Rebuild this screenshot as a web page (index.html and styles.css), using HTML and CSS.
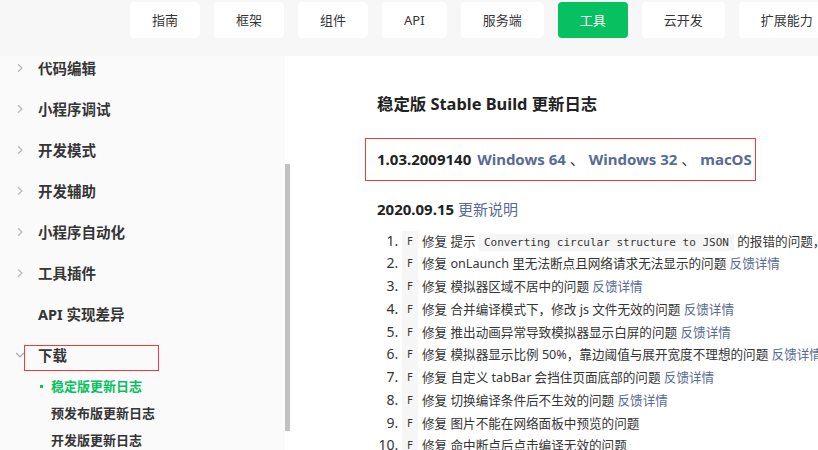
FILE: index.html
```html
<!DOCTYPE html>
<html lang="zh-CN">
<head>
<meta charset="utf-8">
<title>稳定版更新日志</title>
<link rel="stylesheet" href="styles.css">
</head>
<body>
<header class="topbar">
  <nav class="tabs">
    <a class="tab">指南</a>
    <a class="tab">框架</a>
    <a class="tab">组件</a>
    <a class="tab">API</a>
    <a class="tab">服务端</a>
    <a class="tab active">工具</a>
    <a class="tab">云开发</a>
    <a class="tab">扩展能力</a>
  </nav>
</header>
<div class="layout">
  <aside class="sidebar">
    <ul class="menu">
      <li class="menu-item"><span class="chev"><svg width="8" height="10" viewBox="0 0 8 10"><path d="M2 1.2 L6 5 L2 8.8" fill="none" stroke="#b8b8b8" stroke-width="1.2"/></svg></span><span class="label">代码编辑</span></li>
      <li class="menu-item"><span class="chev"><svg width="8" height="10" viewBox="0 0 8 10"><path d="M2 1.2 L6 5 L2 8.8" fill="none" stroke="#b8b8b8" stroke-width="1.2"/></svg></span><span class="label">小程序调试</span></li>
      <li class="menu-item"><span class="chev"><svg width="8" height="10" viewBox="0 0 8 10"><path d="M2 1.2 L6 5 L2 8.8" fill="none" stroke="#b8b8b8" stroke-width="1.2"/></svg></span><span class="label">开发模式</span></li>
      <li class="menu-item"><span class="chev"><svg width="8" height="10" viewBox="0 0 8 10"><path d="M2 1.2 L6 5 L2 8.8" fill="none" stroke="#b8b8b8" stroke-width="1.2"/></svg></span><span class="label">开发辅助</span></li>
      <li class="menu-item"><span class="chev"><svg width="8" height="10" viewBox="0 0 8 10"><path d="M2 1.2 L6 5 L2 8.8" fill="none" stroke="#b8b8b8" stroke-width="1.2"/></svg></span><span class="label">小程序自动化</span></li>
      <li class="menu-item"><span class="chev"><svg width="8" height="10" viewBox="0 0 8 10"><path d="M2 1.2 L6 5 L2 8.8" fill="none" stroke="#b8b8b8" stroke-width="1.2"/></svg></span><span class="label">工具插件</span></li>
      <li class="menu-item"><span class="chev"></span><span class="label">API 实现差异</span></li>
      <li class="menu-item open"><span class="chev"><svg width="10" height="8" viewBox="0 0 10 8"><path d="M1.2 2 L5 6 L8.8 2" fill="none" stroke="#a8a8a8" stroke-width="1.2"/></svg></span><span class="label">下载</span><span class="mark"></span></li>
    </ul>
    <ul class="submenu">
      <li class="sub-item active">稳定版更新日志</li>
      <li class="sub-item">预发布版更新日志</li>
      <li class="sub-item">开发版更新日志</li>
    </ul>
    <div class="thumb"></div>
  </aside>
  <main class="content">
    <h1 class="title">稳定版 Stable Build 更新日志</h1>
    <div class="version-box">
      <span class="ver">1.03.2009140</span> <a class="link">Windows 64</a> <span class="sep">、</span> <a class="link">Windows 32</a> <span class="sep">、</span> <a class="link">macOS</a>
    </div>
    <p class="date-line"><span class="date">2020.09.15</span> <a class="link-plain">更新说明</a></p>
    <ol class="changes">
      <li><span class="tag">F</span>修复 提示 <code class="code">Converting circular structure to JSON</code> 的报错的问题，<a class="link-plain">反馈详情</a></li>
      <li><span class="tag">F</span>修复 onLaunch 里无法断点且网络请求无法显示的问题 <a class="link-plain">反馈详情</a></li>
      <li><span class="tag">F</span>修复 模拟器区域不居中的问题 <a class="link-plain">反馈详情</a></li>
      <li><span class="tag">F</span>修复 合并编译模式下，修改 js 文件无效的问题 <a class="link-plain">反馈详情</a></li>
      <li><span class="tag">F</span>修复 推出动画异常导致模拟器显示白屏的问题 <a class="link-plain">反馈详情</a></li>
      <li><span class="tag">F</span>修复 模拟器显示比例 50%，靠边阈值与展开宽度不理想的问题 <a class="link-plain">反馈详情</a></li>
      <li><span class="tag">F</span>修复 自定义 tabBar 会挡住页面底部的问题 <a class="link-plain">反馈详情</a></li>
      <li><span class="tag">F</span>修复 切换编译条件后不生效的问题 <a class="link-plain">反馈详情</a></li>
      <li><span class="tag">F</span>修复 图片不能在网络面板中预览的问题</li>
      <li><span class="tag">F</span>修复 命中断点后点击编译无效的问题</li>
    </ol>
  </main>
</div>
</body>
</html>
```
FILE: styles.css
```css
* { box-sizing: border-box; }
html, body { margin: 0; padding: 0; }
body {
  width: 818px;
  height: 450px;
  overflow: hidden;
  background: #ffffff;
  font-family: "Noto Sans", "Noto Sans CJK SC", sans-serif;
  color: #353535;
}
ul, ol { margin: 0; padding: 0; list-style: none; }
a { text-decoration: none; cursor: pointer; }

.topbar {
  height: 56px;
  background: #f7f7f7;
  overflow: hidden;
}
.tabs {
  display: flex;
  gap: 14px;
  padding: 2px 0 0 130px;
  white-space: nowrap;
}
.tab {
  flex: none;
  height: 36px;
  line-height: 36px;
  padding: 0 22px;
  background: #ffffff;
  border-radius: 4px;
  font-size: 13px;
  color: #353535;
}
.tab.active { background: #07c160; color: #ffffff; }

.layout {
  display: grid;
  grid-template-columns: 285px 1fr;
  height: 394px;
  overflow: hidden;
}

.sidebar {
  position: relative;
  background: #fafafa;
}
.menu { margin-top: -9px; }
.menu-item {
  position: relative;
  display: flex;
  align-items: center;
  height: 41px;
  font-size: 14.5px;
  font-weight: 700;
  color: #353535;
}
.chev {
  width: 38px;
  padding-left: 16px;
  display: flex;
  align-items: center;
}
.menu-item.open .chev { padding-left: 15px; }
.mark {
  position: absolute;
  left: 24px;
  top: 11px;
  width: 135px;
  height: 26px;
  border: 1px solid #f23a3a;
}
.submenu { margin-top: -2.5px; }
.sub-item {
  position: relative;
  height: 27px;
  line-height: 27px;
  padding-left: 51px;
  font-size: 13px;
  font-weight: 600;
  color: #353535;
}
.sub-item.active { color: #07c160; }
.sub-item.active::before {
  content: "";
  position: absolute;
  left: 40px;
  top: 12px;
  width: 3px;
  height: 3px;
  background: #07c160;
}
.thumb {
  position: absolute;
  left: 285px;
  top: 108px;
  width: 5px;
  height: 267px;
  background: #c1c1c1;
}

.content {
  padding: 36px 0 0 92px;
  white-space: nowrap;
  overflow: hidden;
}
.title {
  margin: 0;
  height: 24px;
  line-height: 24px;
  font-size: 16.4px;
  font-weight: 700;
  color: #222;
}
.version-box {
  margin: 22px 0 0 -12px;
  width: 391px;
  height: 43px;
  line-height: 41px;
  padding-left: 11px;
  border: 1px solid #f23a3a;
  font-size: 15px;
  font-weight: 700;
  color: #222;
}
.ver { margin-right: 2px; }
.link { color: #576b95; }
.sep { font-weight: 400; color: #353535; }
.date-line {
  margin: 17px 0 0;
  height: 22px;
  line-height: 22px;
  font-size: 15px;
}
.date { font-weight: 700; color: #222; }
.link-plain { color: #576b95; }
.changes {
  margin-top: 9.5px;
  padding-left: 25px;
  list-style: decimal;
  font-size: 12.6px;
}
.changes li {
  height: 22.75px;
  line-height: 22.75px;
  color: #353535;
}
.changes li::marker { font-size: 14px; }
.tag {
  display: inline-block;
  vertical-align: top;
  width: 16px;
  height: 22.75px;
  line-height: 22.75px;
  margin-right: 4px;
  text-align: center;
  background: #f6f6f6;
  font-family: "DejaVu Sans Mono", monospace;
  font-size: 10px;
}
.code {
  background: #f5f5f5;
  padding: 2px 5px;
  font-family: "DejaVu Sans Mono", monospace;
  font-size: 11px;
}
```
